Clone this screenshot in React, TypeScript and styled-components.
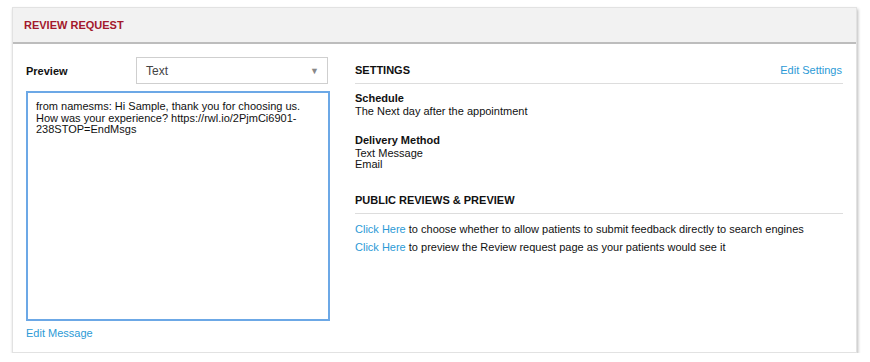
import React from "react";
import styled, { createGlobalStyle } from "styled-components";

const GlobalStyle = createGlobalStyle`
  html, body { margin: 0; padding: 0; background: #ffffff; }
  body { font-family: "Liberation Sans", Arial, Helvetica, sans-serif; color: #111; }
`;

const Page = styled.div`
  padding: 7px 13px 0 12px;
`;

const Panel = styled.section`
  background: #fff;
  border: 1px solid #e2e2e2;
  box-shadow: 1px 2px 3px rgba(0, 0, 0, 0.28);
  height: 346px;
  box-sizing: border-box;
  display: flex;
  flex-direction: column;
`;

const PanelHeader = styled.header`
  height: 34px;
  background: #f2f2f2;
  border-bottom: 2px solid #bdbdbd;
  display: flex;
  align-items: center;
  padding: 0 11px;
`;

const Title = styled.h2`
  margin: 0;
  font-size: 11px;
  font-weight: bold;
  color: #a3182c;
`;

const Body = styled.div`
  display: grid;
  grid-template-columns: 303px 1fr;
  column-gap: 26px;
  padding: 13px 13px 0 13px;
`;

const LeftCol = styled.div`
  display: flex;
  flex-direction: column;
`;

const PreviewRow = styled.div`
  display: flex;
  align-items: center;
  height: 27px;
`;

const Label = styled.span`
  width: 110px;
  font-size: 11px;
  font-weight: bold;
`;

const Select = styled.div`
  position: relative;
  width: 192px;
  height: 27px;
  box-sizing: border-box;
  border: 1px solid #cfcfcf;
  display: flex;
  align-items: center;
  padding-left: 9px;
  font-size: 12px;
  color: #444;
`;

const Caret = styled.span`
  position: absolute;
  right: 8px;
  top: 8px;
  font-size: 9px;
  color: #888;
`;

const MessageBox = styled.div`
  margin-top: 7px;
  width: 304px;
  height: 230px;
  box-sizing: border-box;
  border: 2px solid #6ca8e6;
  padding: 8px 8px 0 8px;
  font-size: 11px;
  line-height: 11.5px;
  color: #111;
`;

const Link = styled.a`
  color: #2c9ad6;
  text-decoration: none;
  cursor: pointer;
`;

const EditMessage = styled(Link)`
  font-size: 11px;
  margin-top: 6px;
  line-height: 12px;
`;

const RightCol = styled.div`
  display: flex;
  flex-direction: column;
`;

const SectionHead = styled.div<{ $gap?: number }>`
  height: 26px;
  display: flex;
  align-items: center;
  justify-content: space-between;
  border-bottom: 1px solid #dddddd;
  margin-top: ${(p) => p.$gap ?? 0}px;
`;

const SectionTitle = styled.h3`
  margin: 0;
  font-size: 11px;
  font-weight: bold;
`;

const HeadLink = styled(Link)`
  font-size: 11px;
  margin-right: 1px;
`;

const Field = styled.div<{ $gap: number }>`
  margin-top: ${(p) => p.$gap}px;
  font-size: 11px;
`;

const FieldLabel = styled.div`
  font-weight: bold;
  line-height: 12px;
  margin-bottom: 2px;
`;

const FieldValue = styled.div`
  line-height: 11px;
`;

const LinkLines = styled.div`
  margin-top: 6px;
  font-size: 11px;
  line-height: 18px;
`;

export default function App() {
  return (
    <>
      <GlobalStyle />
      <Page>
        <Panel>
          <PanelHeader>
            <Title>REVIEW REQUEST</Title>
          </PanelHeader>
          <Body>
            <LeftCol>
              <PreviewRow>
                <Label>Preview</Label>
                <Select>
                  Text
                  <Caret>▼</Caret>
                </Select>
              </PreviewRow>
              <MessageBox>
                from namesms: Hi Sample, thank you for choosing us.
                <br />
                How was your experience? https://rwl.io/2PjmCi6901-
                <br />
                238STOP=EndMsgs
              </MessageBox>
              <EditMessage>Edit Message</EditMessage>
            </LeftCol>
            <RightCol>
              <SectionHead>
                <SectionTitle>SETTINGS</SectionTitle>
                <HeadLink>Edit Settings</HeadLink>
              </SectionHead>
              <Field $gap={8}>
                <FieldLabel>Schedule</FieldLabel>
                <FieldValue>The Next day after the appointment</FieldValue>
              </Field>
              <Field $gap={17}>
                <FieldLabel>Delivery Method</FieldLabel>
                <FieldValue>Text Message</FieldValue>
                <FieldValue>Email</FieldValue>
              </Field>
              <SectionHead $gap={17}>
                <SectionTitle>PUBLIC REVIEWS &amp; PREVIEW</SectionTitle>
              </SectionHead>
              <LinkLines>
                <div>
                  <Link>Click Here</Link> to choose whether to allow patients to submit feedback directly to search engines
                </div>
                <div>
                  <Link>Click Here</Link> to preview the Review request page as your patients would see it
                </div>
              </LinkLines>
            </RightCol>
          </Body>
        </Panel>
      </Page>
    </>
  );
}
